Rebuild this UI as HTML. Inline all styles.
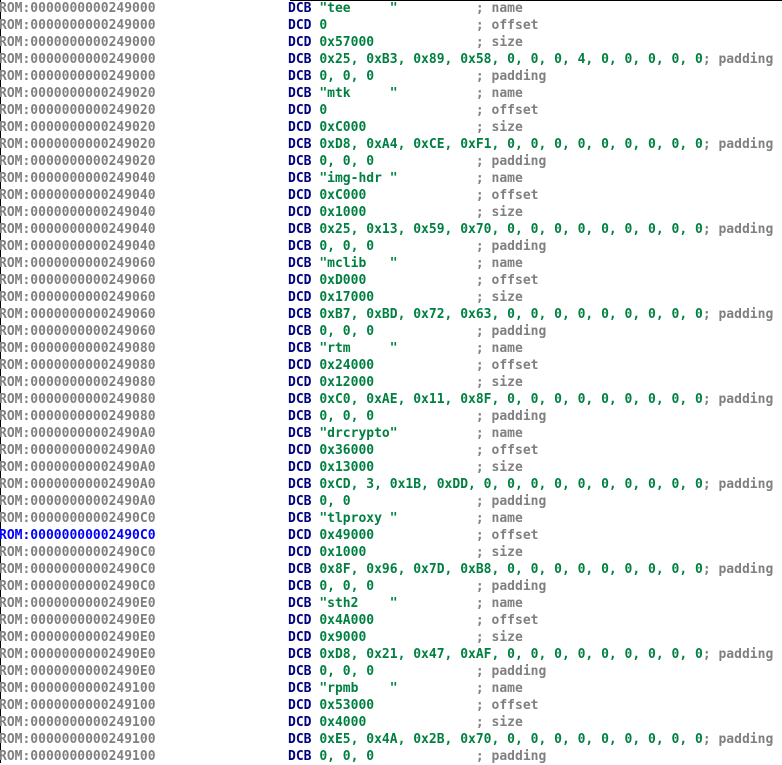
<!DOCTYPE html><html><head><style>
body{margin:0;background:#fff;width:782px;height:763px;overflow:hidden;position:relative;font-family:"DejaVu Sans Mono","Liberation Mono",monospace;font-size:13px;font-weight:bold}
.r{position:absolute;left:0;height:17px;line-height:17px;white-space:pre;width:782px}
.a{position:absolute;left:-1px;color:#808080}
.h{color:#0000ff}
.i{position:absolute;left:288px}
.k{color:#000080}.g{color:#008040}.c{color:#808080}
#vl{position:absolute;left:0;top:0;width:1px;height:763px;background:#000}
#tl{position:absolute;left:290px;top:0;width:492px;height:1px;background:#000}
</style></head><body>
<div id="vl"></div><div id="tl"></div>
<div id="out"></div>
<script>
var B=[["249000",'"tee     "',"0","0x57000","0x25, 0xB3, 0x89, 0x58, 0, 0, 0, 4, 0, 0, 0, 0, 0","0, 0, 0"],
["249020",'"mtk     "',"0","0xC000","0xD8, 0xA4, 0xCE, 0xF1, 0, 0, 0, 0, 0, 0, 0, 0, 0","0, 0, 0"],
["249040",'"img-hdr "',"0xC000","0x1000","0x25, 0x13, 0x59, 0x70, 0, 0, 0, 0, 0, 0, 0, 0, 0","0, 0, 0"],
["249060",'"mclib   "',"0xD000","0x17000","0xB7, 0xBD, 0x72, 0x63, 0, 0, 0, 0, 0, 0, 0, 0, 0","0, 0, 0"],
["249080",'"rtm     "',"0x24000","0x12000","0xC0, 0xAE, 0x11, 0x8F, 0, 0, 0, 0, 0, 0, 0, 0, 0","0, 0, 0"],
["2490A0",'"drcrypto"',"0x36000","0x13000","0xCD, 3, 0x1B, 0xDD, 0, 0, 0, 0, 0, 0, 0, 0, 0, 0","0, 0"],
["2490C0",'"tlproxy "',"0x49000","0x1000","0x8F, 0x96, 0x7D, 0xB8, 0, 0, 0, 0, 0, 0, 0, 0, 0","0, 0, 0"],
["2490E0",'"sth2    "',"0x4A000","0x9000","0xD8, 0x21, 0x47, 0xAF, 0, 0, 0, 0, 0, 0, 0, 0, 0","0, 0, 0"],
["249100",'"rpmb    "',"0x53000","0x4000","0xE5, 0x4A, 0x2B, 0x70, 0, 0, 0, 0, 0, 0, 0, 0, 0","0, 0, 0"]];
function pad(s,n){while(s.length<n)s+=" ";return s}
var h="",n=0;
B.forEach(function(b){
 var L=[["DCB",b[1],"name"],["DCD",b[2],"offset"],["DCD",b[3],"size"],["DCB",b[4],"padding"],["DCB",b[5],"padding"]];
 L.forEach(function(l){
  var op=l[1],p=op.length<20?pad(op,20):op;
  h+='<div class="r" style="top:'+(n*17)+'px"><span class="a'+(n==31?' h':'')+'">ROM:0000000000'+b[0]+'</span><span class="i"><span class="k">'+l[0]+'</span> <span class="g">'+op+'</span>'+p.slice(op.length)+'<span class="c">; '+l[2]+'</span></span></div>';
  n++;
 });
});
document.getElementById("out").innerHTML=h;
</script>
</body></html>
